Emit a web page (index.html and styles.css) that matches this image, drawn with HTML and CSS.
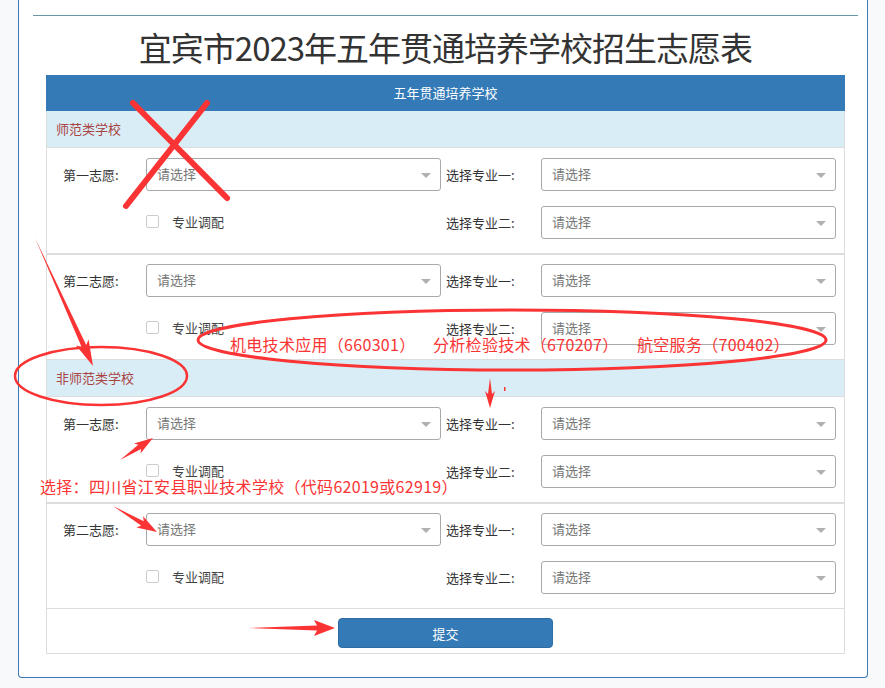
FILE: index.html
```html
<!DOCTYPE html>
<html lang="zh-CN">
<head>
<meta charset="UTF-8">
<meta name="viewport" content="width=device-width, initial-scale=1.0">
<title>宜宾市2023年五年贯通培养学校招生志愿表</title>
<link rel="stylesheet" href="styles.css">
</head>
<body>

<div class="panel">
    <div class="rule"></div>
    <h1 class="title">宜宾市2023年五年贯通培养学校招生志愿表</h1>

    <div class="sheet">
        <div class="sheet-head">五年贯通培养学校</div>

        <div class="group">
            <div class="group-title">师范类学校</div>
            <div class="choice">
                <div class="field-label">第一志愿:</div>
                <div class="select">请选择</div>
                <div class="field-label second">选择专业一:</div>
                <div class="select">请选择</div>
                <div></div>
                <div class="adjust"><span class="check"></span>专业调配</div>
                <div class="field-label second">选择专业二:</div>
                <div class="select">请选择</div>
            </div>
            <div class="choice">
                <div class="field-label">第二志愿:</div>
                <div class="select">请选择</div>
                <div class="field-label second">选择专业一:</div>
                <div class="select">请选择</div>
                <div></div>
                <div class="adjust"><span class="check"></span>专业调配</div>
                <div class="field-label second">选择专业二:</div>
                <div class="select">请选择</div>
            </div>
        </div>

        <div class="group">
            <div class="group-title">非师范类学校</div>
            <div class="choice">
                <div class="field-label">第一志愿:</div>
                <div class="select">请选择</div>
                <div class="field-label second">选择专业一:</div>
                <div class="select">请选择</div>
                <div></div>
                <div class="adjust"><span class="check"></span>专业调配</div>
                <div class="field-label second">选择专业二:</div>
                <div class="select">请选择</div>
            </div>
            <div class="choice">
                <div class="field-label">第二志愿:</div>
                <div class="select">请选择</div>
                <div class="field-label second">选择专业一:</div>
                <div class="select">请选择</div>
                <div></div>
                <div class="adjust"><span class="check"></span>专业调配</div>
                <div class="field-label second">选择专业二:</div>
                <div class="select">请选择</div>
            </div>
        </div>

        <div class="actions">
            <button type="button" class="submit">提交</button>
        </div>
    </div>
</div>

<!-- red hand-drawn notes on top of the form -->
<svg class="marks" width="885" height="688" viewBox="0 0 885 688">
    <g stroke="#fa3434" stroke-linecap="round" fill="none">
        <line x1="207" y1="103" x2="126" y2="206" stroke-width="6"/>
        <line x1="133" y1="103" x2="227" y2="198" stroke-width="6"/>
        <ellipse cx="101" cy="376" rx="86" ry="29" stroke-width="2.5"/>
        <ellipse cx="512" cy="340" rx="314" ry="30" stroke-width="3"/>
    </g>
    <g fill="#fa3434">
        <polygon points="35,238 81.6,347 75.9,345.2 93,366 88.6,339.4 86.2,345"/>
        <polygon points="490,378 488,394 485,391 490,408 495,391 492,394"/>
        <rect x="504" y="387" width="1.5" height="4"/>
        <polygon points="120,460 141.1,449 140.5,453.5 153,438 133.9,443.5 138.3,444.8"/>
        <polygon points="113,506 141.1,525.5 136.5,527.4 157,532 143.1,516.2 143.7,521.2"/>
        <polygon points="248,628 317,630.5 314,636 335,628 314,620 317,625.5"/>
    </g>
</svg>
<span class="note" style="left:230px; top:334px;">机电技术应用（660301）</span>
<span class="note" style="left:433px; top:334px;">分析检验技术（670207）</span>
<span class="note" style="left:637px; top:334px;">航空服务（700402）</span>
<span class="note" style="left:40px; top:476px;">选择：四川省江安县职业技术学校（代码62019或62919）</span>

</body>
</html>
```

FILE: styles.css
```css
body {
    margin: 0;
    padding: 0;
    background-color: #f7f9fb;
    font-family: "Noto Sans CJK SC", "Noto Sans", sans-serif;
    font-size: 13px;
    color: #333;
    position: relative;
    height: 688px;
    overflow: hidden;
}

.panel {
    width: 848px;
    margin-left: 18px;
    padding: 15px 0 23px;
    background-color: #fff;
    border: 1px solid #3c7ab5;
    border-top: 0;
    border-radius: 0 0 4px 4px;
}

.rule {
    height: 1px;
    margin: 0 9px 0 14px;
    background-color: #6a97a6;
}

.title {
    margin: 13px 22px 9px 27px;
    font-size: 33px;
    line-height: 37px;
    letter-spacing: -1px;
    font-weight: normal;
    text-align: center;
    color: #333;
}

.sheet {
    margin: 0 22px 0 27px;
    border: 1px solid #ddd;
    border-top: 0;
}

.sheet-head {
    height: 36px;
    line-height: 36px;
    background-color: #337ab7;
    color: #fff;
    text-align: center;
    margin: 0 -1px;
}

.group {
    border-bottom: 1px solid #ddd;
}

.group-title {
    height: 36px;
    line-height: 36px;
    padding-left: 9px;
    background-color: #d9edf7;
    color: #a94442;
    border-bottom: 1px solid #ddd;
}

.choice {
    display: grid;
    grid-template-columns: 99px 295px 100px 295px;
    grid-auto-rows: 33px;
    row-gap: 15px;
    align-items: center;
    padding: 10px 8px 14px 0;
}

.choice + .choice {
    border-top: 2px solid #ddd;
    padding-top: 9px;
}

.field-label {
    padding-left: 16px;
    white-space: nowrap;
}

.field-label.second {
    padding-left: 5px;
}

.select {
    position: relative;
    height: 33px;
    box-sizing: border-box;
    padding-left: 10px;
    line-height: 30px;
    border: 1px solid #a9a9a9;
    border-radius: 3px;
    color: #777;
    background-color: #fff;
}

.select::after {
    content: "";
    position: absolute;
    right: 9px;
    top: 14px;
    border-left: 5px solid transparent;
    border-right: 5px solid transparent;
    border-top: 5px solid #b0b0b0;
}

.adjust {
    display: flex;
    align-items: center;
    color: #444;
    margin-top: -3px;
}

.check {
    width: 13px;
    height: 13px;
    box-sizing: border-box;
    border: 1px solid #ccc;
    border-radius: 2px;
    margin-right: 13px;
    background-color: #fff;
}

.actions {
    padding: 9px 0 5px;
}

.submit {
    display: block;
    width: 215px;
    height: 30px;
    margin: 0 auto;
    background-color: #337ab7;
    border: 1px solid #2e6da4;
    border-radius: 4px;
    color: #fff;
    font-family: inherit;
    font-size: 13px;
    cursor: pointer;
}

/* annotations drawn over the page */
.marks {
    position: absolute;
    top: 0;
    left: 0;
    pointer-events: none;
}

.note {
    position: absolute;
    font-size: 16px;
    line-height: 20px;
    letter-spacing: 0.3px;
    color: #fa3434;
    white-space: nowrap;
}
```
